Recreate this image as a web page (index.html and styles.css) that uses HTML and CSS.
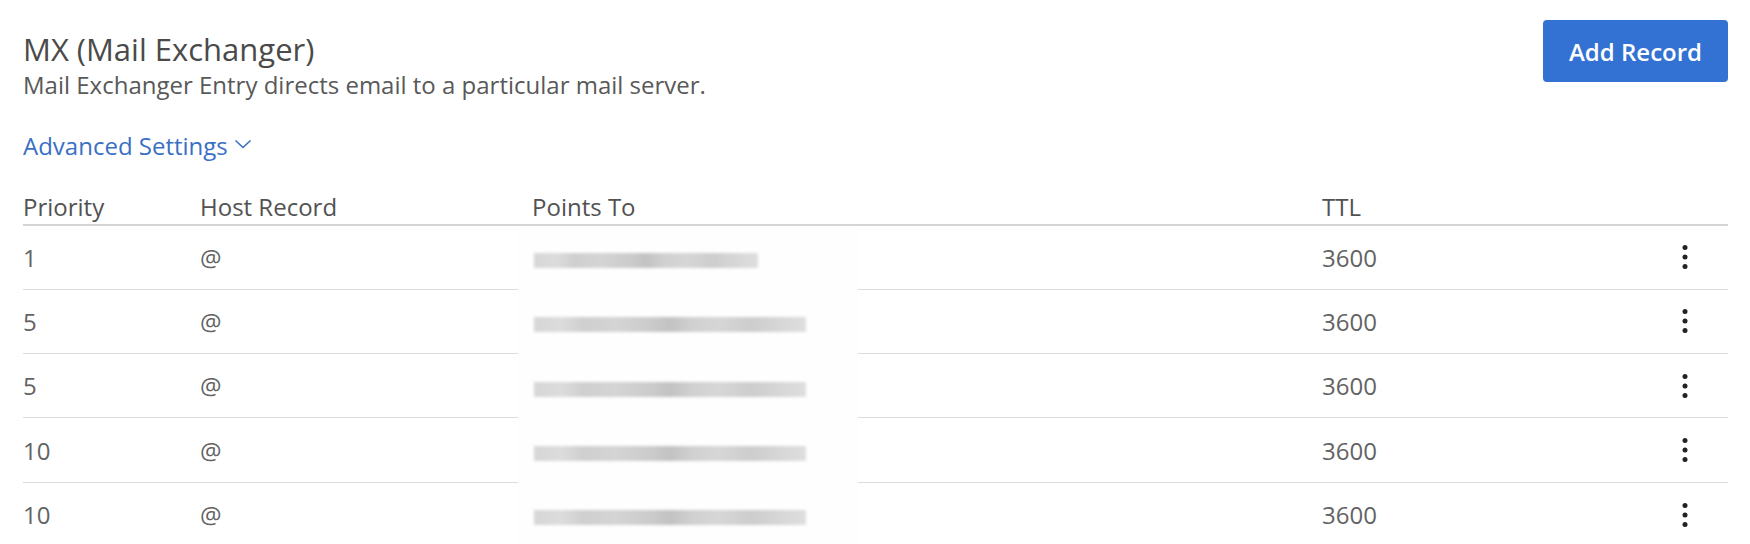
FILE: index.html
```html
<!DOCTYPE html>
<html lang="en">
<head>
<meta charset="utf-8">
<title>MX (Mail Exchanger)</title>
<link rel="stylesheet" href="styles.css">
</head>
<body>
<main class="panel">
  <header class="top">
    <div class="intro">
      <h1 class="title">MX (Mail Exchanger)</h1>
      <p class="subtitle">Mail Exchanger Entry directs email to a particular mail server.</p>
      <a class="advanced" href="#">Advanced Settings<svg class="chev" width="18" height="10" viewBox="0 0 18 10" aria-hidden="true"><polyline points="1.5,1.5 9,8.5 16.5,1.5" fill="none" stroke="currentColor" stroke-width="1.6"/></svg></a>
    </div>
    <button class="add-btn" type="button">Add Record</button>
  </header>

  <section class="table">
    <div class="row head">
      <div class="cell">Priority</div>
      <div class="cell">Host Record</div>
      <div class="cell">Points To</div>
      <div class="cell">TTL</div>
      <div class="cell"></div>
    </div>
    <div class="body">
      <div class="row">
        <div class="cell">1</div><div class="cell">@</div><div class="cell"></div><div class="cell">3600</div>
        <div class="cell act"><svg class="kebab" width="6" height="26" viewBox="0 0 6 26"><circle cx="3" cy="3.5" r="2.5"/><circle cx="3" cy="13" r="2.5"/><circle cx="3" cy="22.5" r="2.5"/></svg></div>
      </div>
      <div class="row">
        <div class="cell">5</div><div class="cell">@</div><div class="cell"></div><div class="cell">3600</div>
        <div class="cell act"><svg class="kebab" width="6" height="26" viewBox="0 0 6 26"><circle cx="3" cy="3.5" r="2.5"/><circle cx="3" cy="13" r="2.5"/><circle cx="3" cy="22.5" r="2.5"/></svg></div>
      </div>
      <div class="row">
        <div class="cell">5</div><div class="cell">@</div><div class="cell"></div><div class="cell">3600</div>
        <div class="cell act"><svg class="kebab" width="6" height="26" viewBox="0 0 6 26"><circle cx="3" cy="3.5" r="2.5"/><circle cx="3" cy="13" r="2.5"/><circle cx="3" cy="22.5" r="2.5"/></svg></div>
      </div>
      <div class="row">
        <div class="cell">10</div><div class="cell">@</div><div class="cell"></div><div class="cell">3600</div>
        <div class="cell act"><svg class="kebab" width="6" height="26" viewBox="0 0 6 26"><circle cx="3" cy="3.5" r="2.5"/><circle cx="3" cy="13" r="2.5"/><circle cx="3" cy="22.5" r="2.5"/></svg></div>
      </div>
      <div class="row last">
        <div class="cell">10</div><div class="cell">@</div><div class="cell"></div><div class="cell">3600</div>
        <div class="cell act"><svg class="kebab" width="6" height="26" viewBox="0 0 6 26"><circle cx="3" cy="3.5" r="2.5"/><circle cx="3" cy="13" r="2.5"/><circle cx="3" cy="22.5" r="2.5"/></svg></div>
      </div>

      <div class="redaction" aria-hidden="true">
        <div class="blur-row"><span class="bar short"></span></div>
        <div class="blur-row"><span class="bar"></span></div>
        <div class="blur-row"><span class="bar"></span></div>
        <div class="blur-row"><span class="bar"></span></div>
        <div class="blur-row"><span class="bar"></span></div>
      </div>
    </div>
  </section>
</main>
</body>
</html>
```

FILE: styles.css
```css
* { box-sizing: border-box; }

html, body {
  margin: 0;
  padding: 0;
  background: #ffffff;
}

body {
  font-family: "Open Sans", "Noto Sans", sans-serif;
  color: #555555;
  width: 1750px;
  height: 544px;
  overflow: hidden;
}

.panel {
  padding: 0 22px 0 23px;
}

.top {
  display: flex;
  justify-content: space-between;
  align-items: flex-start;
}

.intro {
  display: flex;
  flex-direction: column;
  align-items: flex-start;
  padding-top: 29px;
}

.title {
  margin: 0;
  font-size: 31px;
  line-height: 40px;
  font-weight: 400;
  color: #4a4a4a;
}

.subtitle {
  margin: 1px 0 0;
  font-size: 24px;
  line-height: 30px;
  color: #595959;
}

.advanced {
  margin-top: 30px;
  font-size: 24px;
  line-height: 32px;
  color: #3a6fc4;
  text-decoration: none;
  display: inline-flex;
  align-items: center;
}

.chev {
  margin-left: 6px;
  margin-top: -4px;
}

.add-btn {
  margin-top: 20px;
  width: 185px;
  height: 62px;
  border: none;
  border-radius: 4px;
  background: #3372d3;
  color: #ffffff;
  font-family: "Open Sans", "Noto Sans", sans-serif;
  font-size: 24px;
  font-weight: 600;
  cursor: pointer;
}

.table {
  margin-top: 29.5px;
}

.row {
  display: grid;
  grid-template-columns: 177px 332px 790px 320px 1fr;
  align-items: center;
  height: 64.3px;
  border-bottom: 1px solid #dcdcdc;
  font-size: 24px;
  color: #636363;
}

.row.head {
  height: auto;
  align-items: end;
  padding-bottom: 2px;
  border-bottom: 2px solid #d4d4d4;
  color: #525252;
  line-height: 30px;
}

.row.last { border-bottom: none; }

.cell {
  white-space: nowrap;
}

.act {
  display: flex;
  justify-content: center;
  align-items: center;
}

.kebab { fill: #222222; display: block; }

.body {
  position: relative;
}

.redaction {
  position: absolute;
  top: 0;
  bottom: 0;
  left: 495px;
  width: 340px;
  background: #fefefe;
  display: flex;
  flex-direction: column;
}

.blur-row {
  height: 64.3px;
  flex: none;
  display: flex;
  align-items: center;
  padding-left: 16px;
  padding-top: 6px;
}

.bar {
  display: block;
  width: 272px;
  height: 15px;
  filter: blur(1.5px);
  background: linear-gradient(90deg,
    #d6d6d6 0%, #dcdcdc 10%, #cfcfcf 18%, #d4d4d4 30%, #cccccc 42%,
    #c2c2c2 50%, #d0d0d0 58%, #d6d6d6 68%, #cdcdcd 80%, #d8d8d8 92%, #dedede 100%);
}

.bar.short { width: 224px; }
```
